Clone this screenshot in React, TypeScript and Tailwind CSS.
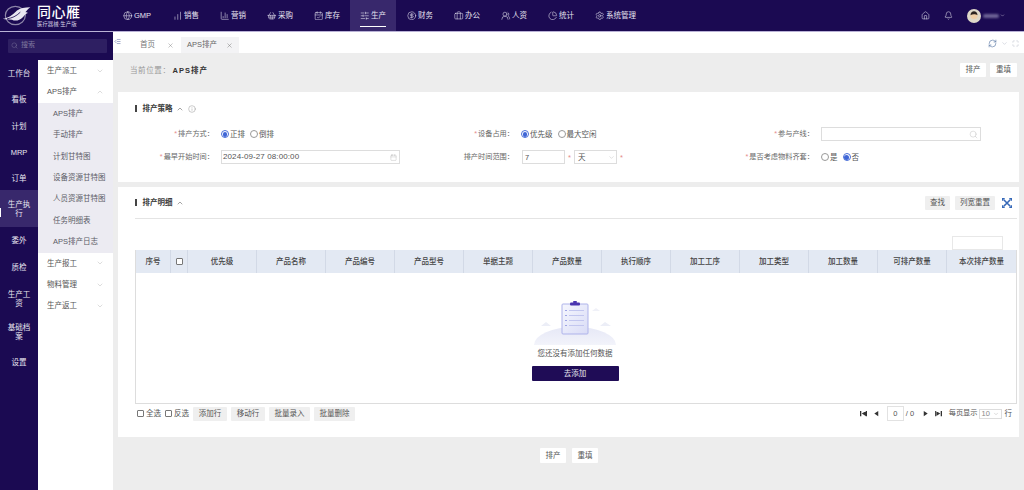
import React from "react"
import {
  Bell,
  Briefcase,
  Calendar,
  CalendarCheck,
  ChartColumn,
  ChartNoAxesColumnIncreasing,
  ChartPie,
  ChevronDown,
  ChevronUp,
  CircleDollarSign,
  Globe,
  House,
  Info,
  RefreshCw,
  Search,
  Settings,
  ShoppingBasket,
  SlidersHorizontal,
  UsersRound,
  X,
  Maximize,
  IndentDecrease,
} from "lucide-react"

const navItems = [
  { label: "GMP", icon: Globe, width: "w-[50px]" },
  { label: "销售", icon: ChartNoAxesColumnIncreasing, width: "w-[47px]" },
  { label: "营销", icon: ChartColumn, width: "w-[47px]" },
  { label: "采购", icon: ShoppingBasket, width: "w-[47px]" },
  { label: "库存", icon: CalendarCheck, width: "w-[36px]" },
  { label: "生产", icon: SlidersHorizontal, width: "mr-[11px] w-[46px]", active: true },
  { label: "财务", icon: CircleDollarSign, width: "w-[47px]" },
  { label: "办公", icon: Briefcase, width: "w-[47px]" },
  { label: "人资", icon: UsersRound, width: "w-[47px]" },
  { label: "统计", icon: ChartPie, width: "w-[47px]" },
  { label: "系统管理", icon: Settings, width: "w-[62px]" },
]

const railItems = [
  { label: "工作台", className: "h-[26.5px]" },
  { label: "看板", className: "h-[26.5px]" },
  { label: "计划", className: "h-[26px]" },
  { label: "MRP", className: "h-[26.5px]" },
  { label: "订单", className: "h-[26.5px]" },
  { label: "生产执行", className: "-mt-[2px] h-[37px] bg-[#38286c]", active: true },
  { label: "委外", className: "h-[27px]" },
  { label: "质检", className: "h-[27px]" },
  { label: "生产工资", className: "h-[35px]" },
  { label: "基础档案", className: "h-[31px]" },
  { label: "设置", className: "h-[30px]" },
]

const apsChildren = ["APS排产", "手动排产", "计划甘特图", "设备资源甘特图", "人员资源甘特图", "任务明细表", "APS排产日志"]

const columns = ["产品名称", "产品编号", "产品型号", "单据主题", "产品数量", "执行顺序", "加工工序", "加工类型", "加工数量", "可排产数量", "本次排产数量"]

function Logo() {
  return (
    <svg viewBox="0 0 36 26" className="h-[25px] w-[30px]" fill="none">
      <ellipse cx="16" cy="13" rx="12" ry="11" stroke="#8d86a8" strokeWidth="1.4" />
      <path d="M1 17c7-1 12-5 17-10 4-3 9-4 16-4-3 2-4 4-6 6 1 0 2 0 3 1-3 1-4 3-6 5-4 4-9 5-13 3-4 0-8 0-11-1z" fill="#e9e7f1" />
      <path d="M6 17c6-1 11-3 16-8" stroke="#1b0a52" strokeWidth="1" />
    </svg>
  )
}

function TopBar() {
  return (
    <header className="flex h-[32px] shrink-0 items-center border-b border-[#b9b2d6] bg-[#1b0a52]">
      <div className="flex w-[123px] shrink-0 items-center pl-[2px]">
        <Logo />
        <div className="ml-[5px] flex flex-col items-start text-white">
          <span className="text-[14px] leading-[15px] font-medium tracking-[0.5px]">同心雁</span>
          <span className="mt-[1px] text-[5.4px] leading-[6px] whitespace-nowrap text-[#d8d4e6]">医疗器械·生产版</span>
        </div>
      </div>
      <nav className="flex h-full items-stretch">
        {navItems.map((item) => {
          const Icon = item.icon
          return (
            <div
              key={item.label}
              className={`relative flex ${item.width} items-center justify-start gap-[1.5px] text-[7.5px] text-[#e6e3f0] ${item.active ? "bg-[#38286c] pl-[10px]" : ""}`}
            >
              <Icon className="h-[9.5px] w-[9.5px] shrink-0" strokeWidth={1.4} />
              <span className="whitespace-nowrap">{item.label}</span>
              {item.active ? <span className="absolute bottom-[4px] left-[10px] h-[1px] w-[26px] bg-white" /> : null}
            </div>
          )
        })}
      </nav>
      <div className="ml-auto flex items-center pr-[19px] text-[#dcd9e8]">
        <House className="h-[9px] w-[9px]" strokeWidth={1.5} />
        <Bell className="ml-[14px] h-[9px] w-[9px]" strokeWidth={1.5} />
        <svg viewBox="0 0 16 16" className="ml-[14px] h-[14px] w-[14px]">
          <circle cx="8" cy="8" r="8" fill="#ded8c9" />
          <circle cx="8" cy="7.5" r="4" fill="#f0cfa8" />
          <path d="M4 7c0-3 2-4.500 4-4.500S12 4 12 7c-2-1.500-6-1.500-8 0z" fill="#2b2320" />
        </svg>
        <span className="ml-[2px] h-[4px] w-[16px] rounded-[2px] bg-[#6d6396] blur-[1px]" />
        <ChevronDown className="ml-[1px] h-[5px] w-[5px]" strokeWidth={2} />
      </div>
    </header>
  )
}

function SubItem({ label, open }: { label: string; open?: boolean }) {
  const Icon = open ? ChevronUp : ChevronDown
  return (
    <div className="flex h-[21.4px] items-center justify-between pr-[9px] pl-[9px] text-[7.5px] text-[#555]">
      <span>{label}</span>
      <Icon className="h-[8px] w-[8px] text-[#aaa]" strokeWidth={1.2} />
    </div>
  )
}

function Sidebar() {
  return (
    <aside className="flex w-[113px] shrink-0 flex-col bg-[#1b0a52]">
      <div className="flex h-[28px] items-center pb-[1px] pl-[8px]">
        <div className="flex h-[14px] w-[99px] items-center gap-[3px] rounded-[1px] bg-[#2e1f62] pl-[3px] text-[7px] text-[#7f779f]">
          <Search className="h-[7px] w-[7px]" strokeWidth={1.5} />
          <span>搜索</span>
        </div>
      </div>
      <div className="flex flex-1">
        <div className="flex w-[38px] shrink-0 flex-col">
          {railItems.map((item) => (
            <div
              key={item.label}
              className={`relative flex items-center justify-center px-[7px] text-center text-[7.5px] leading-[9px] text-[#e8e6f0] ${item.className}`}
            >
              {item.active ? <span className="absolute top-[18px] left-0 h-[9px] w-[1px] bg-white" /> : null}
              {item.label}
            </div>
          ))}
        </div>
        <div className="flex-1 bg-white">
          <SubItem label="生产派工" />
          <SubItem label="APS排产" open />
          <div className="bg-[#ecebf2]">
            {apsChildren.map((label) => (
              <div key={label} className="flex h-[21.4px] items-center pl-[15px] text-[7.5px] whitespace-nowrap text-[#5b5b66]">
                {label}
              </div>
            ))}
          </div>
          <SubItem label="生产报工" />
          <SubItem label="物料管理" />
          <SubItem label="生产返工" />
        </div>
      </div>
    </aside>
  )
}

function TabBar() {
  return (
    <div className="flex h-[21px] shrink-0 items-end bg-white pr-[5px] text-[7.5px] text-[#777]">
      <IndentDecrease className="mb-[8px] ml-[1px] h-[7px] w-[7px] text-[#3a4a8c]" strokeWidth={1.5} />
      <div className="ml-[19px] flex h-[16px] w-[41px] items-center justify-between pr-[7px]">
        <span>首页</span>
        <X className="h-[7px] w-[7px]" strokeWidth={1.4} />
      </div>
      <div className="flex h-[16px] w-[58px] items-center justify-between bg-[#f3f3f5] pr-[6px] pl-[6px] text-[#666]">
        <span>APS排产</span>
        <X className="h-[7px] w-[7px]" strokeWidth={1.4} />
      </div>
      <div className="mb-[5px] ml-auto flex items-center gap-[4px] text-[#9aa0b4]">
        <RefreshCw className="h-[9px] w-[9px] text-[#45689a]" strokeWidth={1.5} />
        <ChevronDown className="h-[7px] w-[7px]" strokeWidth={1.2} />
        <Maximize className="h-[7px] w-[7px]" strokeWidth={1.2} />
      </div>
    </div>
  )
}

function GhostButton({ label, className = "" }: { label: string; className?: string }) {
  return <button className={`flex h-[14px] items-center justify-center rounded-[1px] text-[7.5px] text-[#555] ${className}`}>{label}</button>
}

function SectionTitle({ title, info }: { title: string; info?: boolean }) {
  return (
    <div className="flex items-center">
      <span className="h-[7px] w-[1.5px] bg-[#444]" />
      <span className="ml-[6px] text-[7.5px] font-bold text-[#3c3c3c]">{title}</span>
      <ChevronUp className="ml-[3px] h-[8px] w-[8px] text-[#555]" strokeWidth={1.6} />
      {info ? <Info className="ml-[4px] h-[8px] w-[8px] text-[#888]" strokeWidth={1.3} /> : null}
    </div>
  )
}

function Radio({ label, checked }: { label: string; checked?: boolean }) {
  return (
    <span className="flex items-center gap-[1px] text-[7.5px] text-[#555]">
      <span className={`flex h-[8px] w-[8px] items-center justify-center rounded-full border ${checked ? "border-[#4a6fd8]" : "border-[#999]"}`}>
        {checked ? <span className="h-[4.500px] w-[4.500px] rounded-full bg-[#3f66d6]" /> : null}
      </span>
      {label}
    </span>
  )
}

function Label({ text, star = true }: { text: string; star?: boolean }) {
  return (
    <div className="flex h-[14px] items-center justify-end pr-[7px] text-[7.2px] whitespace-nowrap text-[#666]">
      {star ? <span className="mr-[1px] text-[#e58a8a]">*</span> : null}
      {text}：
    </div>
  )
}

function StrategyCard() {
  return (
    <section className="h-[90px] bg-white px-[17px] pt-[11px]">
      <SectionTitle title="排产策略" info />
      <div className="-mx-[17px] mt-[13px] grid grid-cols-[103px_179px_121px_179px_121px_160px] gap-y-[9px]">
        <Label text="排产方式" />
        <div className="flex h-[14px] items-center gap-[5px]">
          <Radio label="正排" checked />
          <Radio label="倒排" />
        </div>
        <Label text="设备占用" />
        <div className="flex h-[14px] items-center gap-[5px]">
          <Radio label="优先级" checked />
          <Radio label="最大空闲" />
        </div>
        <Label text="参与产线" />
        <div className="flex h-[14px] items-center justify-end border border-[#ddd] pr-[2px]">
          <Search className="h-[9px] w-[9px] text-[#bbb]" strokeWidth={1.2} />
        </div>

        <Label text="最早开始时间" />
        <div className="flex h-[14px] items-center justify-between border border-[#ddd] pr-[2px] pl-[1px] text-[8px] text-[#555]">
          <span className="tracking-[0.1px]">2024-09-27 08:00:00</span>
          <Calendar className="h-[7px] w-[7px] text-[#aaa]" strokeWidth={1.2} />
        </div>
        <Label text="排产时间范围" star={false} />
        <div className="flex h-[14px] items-center text-[7.5px] text-[#555]">
          <span className="ml-[1px] flex h-[14px] w-[43px] items-center border border-[#ddd] pl-[2px]">7</span>
          <span className="mx-[3px] w-[3px] text-[#e58a8a]">*</span>
          <span className="flex h-[14px] w-[43px] items-center justify-between border border-[#ddd] pr-[1px] pl-[3px]">
            天
            <ChevronDown className="h-[7px] w-[7px] text-[#aaa]" strokeWidth={1.2} />
          </span>
          <span className="ml-[3px] text-[#e58a8a]">*</span>
        </div>
        <Label text="是否考虑物料齐套" />
        <div className="flex h-[14px] items-center gap-[5px]">
          <Radio label="是" />
          <Radio label="否" checked />
        </div>
      </div>
    </section>
  )
}

function EmptyArt() {
  return (
    <svg viewBox="0 0 120 44" className="h-[44px] w-[120px]" fill="none">
      <defs>
        <linearGradient id="hill" x1="0" y1="0" x2="0" y2="1">
          <stop offset="0" stopColor="#e6e8f6" />
          <stop offset="1" stopColor="#ffffff" />
        </linearGradient>
        <linearGradient id="sheet" x1="0" y1="0" x2="1" y2="1">
          <stop offset="0" stopColor="#f6f7fe" />
          <stop offset="1" stopColor="#d9dcf6" />
        </linearGradient>
      </defs>
      <ellipse cx="60" cy="44" rx="41" ry="18" fill="url(#hill)" />
      <path d="M26 25l5-4 5 4z" fill="#eceef7" />
      <path d="M85 25l5-4 6 4z" fill="#eceef7" />
      <path d="M77 10l4-3 4 3z" fill="#f0f1f8" />
      <rect x="47" y="3" width="26" height="30" rx="1" fill="url(#sheet)" stroke="#aeb3ea" strokeWidth="1" />
      <rect x="55" y="1.500" width="10" height="3" rx="1" fill="#4a35b0" />
      <rect x="58" y="0" width="4" height="2" rx="1" fill="#4a35b0" />
      {[9, 14, 19, 24].map((y) => (
        <g key={y}>
          <rect x="50" y={y} width="2" height="1" fill="#9ea4e4" />
          <rect x="54" y={y} width="15" height="1" fill="#c2c6ef" />
        </g>
      ))}
    </svg>
  )
}

function DetailTable() {
  return (
    <div className="border border-t-0 border-[#ddd]">
      <div className="grid h-[23px] grid-cols-[35px_17px_repeat(12,1fr)] bg-[#e3e9f3] text-[7.5px] font-medium text-[#444]">
        <div className="flex items-center justify-center border-r border-[#d2d9e6]">序号</div>
        <div className="flex items-center justify-center border-r border-[#d2d9e6]">
          <span className="h-[7px] w-[7px] rounded-[1px] border border-[#777] bg-white" />
        </div>
        <div className="flex items-center justify-center border-r border-[#d2d9e6]">优先级</div>
        {columns.map((name, i) => (
          <div key={name} className={`flex items-center justify-center ${i < columns.length - 1 ? "border-r border-[#d2d9e6]" : ""}`}>
            {name}
          </div>
        ))}
      </div>
      <div className="flex h-[130px] flex-col items-center pt-[28px] pr-[2px]">
        <EmptyArt />
        <span className="mt-[4px] text-[7.5px] leading-[10px] text-[#555]">您还没有添加任何数据</span>
        <button className="mt-[7px] flex h-[15px] w-[87px] items-center justify-center rounded-[1px] bg-[#1f0c56] text-[7.5px] text-[#e8e6f0]">去添加</button>
      </div>
    </div>
  )
}

function CheckLabel({ label }: { label: string }) {
  return (
    <span className="flex items-center gap-[2px] text-[7.5px] text-[#555]">
      <span className="h-[7px] w-[7px] rounded-[1px] border border-[#777]" />
      {label}
    </span>
  )
}

function PagerIcon({ d }: { d: string }) {
  return (
    <svg viewBox="0 0 8 8" className="h-[7px] w-[7px] shrink-0" fill="#333">
      <path d={d} />
    </svg>
  )
}

function TableFooter() {
  return (
    <div className="mt-[2px] flex h-[15px] items-center pl-[2px] text-[7.5px] text-[#555]">
      <CheckLabel label="全选" />
      <span className="ml-[4px]">
        <CheckLabel label="反选" />
      </span>
      <div className="ml-[4px] flex gap-[4px]">
        <GhostButton label="添加行" className="w-[34px] bg-[#efefef]" />
        <GhostButton label="移动行" className="w-[34px] bg-[#efefef]" />
        <GhostButton label="批量录入" className="w-[41px] bg-[#efefef]" />
        <GhostButton label="批量删除" className="w-[41px] bg-[#efefef]" />
      </div>
      <div className="ml-auto flex items-center pr-[5px]">
        <PagerIcon d="M0 1h1.500v6H0zM7 1v6L2 4zM8 1v6H6.500V1z" />
        <span className="ml-[6px]">
          <PagerIcon d="M6 1v6L1.500 4z" />
        </span>
        <span className="ml-[7px] flex h-[15px] w-[17px] items-center justify-center border border-[#e2e2e2]">0</span>
        <span className="ml-[2px] w-[15px]">/ 0</span>
        <span className="ml-[1px]">
          <PagerIcon d="M2 1v6l4.500-3z" />
        </span>
        <span className="ml-[6px]">
          <PagerIcon d="M0 1h1.500v6H0zM1 1v6l5-3zM8 1v6H6.500V1z" />
        </span>
        <span className="ml-[7px] text-[7.2px] whitespace-nowrap">每页显示</span>
        <span className="ml-[1px] flex h-[10px] w-[23px] items-center justify-between border border-[#ddd] px-[2px] text-[#888]">
          10
          <ChevronDown className="h-[6px] w-[6px] text-[#999]" strokeWidth={1.4} />
        </span>
        <span className="ml-[3px]">行</span>
      </div>
    </div>
  )
}

function DetailCard() {
  return (
    <section className="mt-[5px] h-[250px] bg-white pr-[2px] pl-[17px]">
      <div className="flex h-[32px] items-center border-b border-[#e4e4e4]">
        <SectionTitle title="排产明细" />
        <div className="ml-auto flex items-center gap-[5px] pr-[5px]">
          <GhostButton label="查找" className="w-[25px] bg-[#efefef]" />
          <GhostButton label="列宽重置" className="w-[40px] bg-[#efefef]" />
          <svg viewBox="0 0 10 10" className="ml-[2px] h-[10px] w-[10px]" fill="none" stroke="#3568b8">
            <path d="M2 2l6 6M8 2L2 8" strokeWidth="1.600" />
            <path d="M0.700 2.700v-2h2M7.300 0.700h2v2M9.300 7.300v2h-2M2.700 9.300h-2v-2" strokeWidth="1.400" />
          </svg>
        </div>
      </div>
      <div className="flex h-[31px] items-end justify-end pr-[14px]">
        <span className="h-[14px] w-[51px] border border-[#e8e8e8]" />
      </div>
      <DetailTable />
      <TableFooter />
    </section>
  )
}

export default function App() {
  return (
    <div className="flex h-[490px] w-[1024px] flex-col overflow-hidden bg-[#ededed] font-['Liberation_Sans','Noto_Sans_CJK_SC',sans-serif]">
      <TopBar />
      <div className="flex flex-1">
        <Sidebar />
        <main className="flex flex-1 flex-col">
          <TabBar />
          <div className="px-[5px]">
            <div className="flex h-[39px] items-center justify-between pr-[2px] pl-[12px] text-[7.5px]">
              <div className="flex items-center pb-[4px]">
                <span className="tracking-[0.6px] text-[#999]">当前位置：</span>
                <span className="ml-[2px] font-bold tracking-[1px] text-[#333]">APS排产</span>
              </div>
              <div className="flex gap-[4px] pb-[6px]">
                <GhostButton label="排产" className="w-[26px] bg-white" />
                <GhostButton label="重填" className="w-[27px] bg-white" />
              </div>
            </div>
            <StrategyCard />
            <DetailCard />
            <div className="flex justify-center gap-[6px] pt-[11px] pl-[1px]">
              <GhostButton label="排产" className="h-[15px] w-[26px] bg-white" />
              <GhostButton label="重填" className="h-[15px] w-[26px] bg-white" />
            </div>
          </div>
        </main>
      </div>
    </div>
  )
}
